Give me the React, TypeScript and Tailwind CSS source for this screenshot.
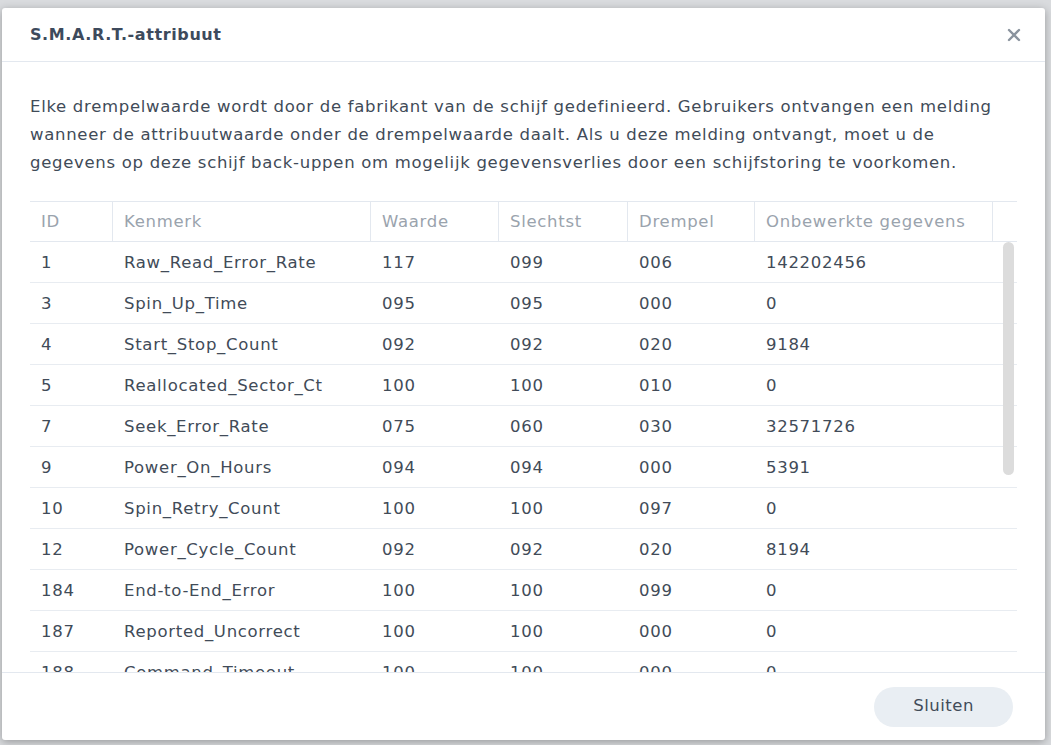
import React from "react";

const rows = [
  ["1","Raw_Read_Error_Rate","117","099","006","142202456"],
  ["3","Spin_Up_Time","095","095","000","0"],
  ["4","Start_Stop_Count","092","092","020","9184"],
  ["5","Reallocated_Sector_Ct","100","100","010","0"],
  ["7","Seek_Error_Rate","075","060","030","32571726"],
  ["9","Power_On_Hours","094","094","000","5391"],
  ["10","Spin_Retry_Count","100","100","097","0"],
  ["12","Power_Cycle_Count","092","092","020","8194"],
  ["184","End-to-End_Error","100","100","099","0"],
  ["187","Reported_Uncorrect","100","100","000","0"],
  ["188","Command_Timeout","100","100","000","0"],
];
const widths = ["w-[83px]","w-[258px]","w-[128px]","w-[129px]","w-[127px]","w-[238px]"];
const heads = ["ID","Kenmerk","Waarde","Slechtst","Drempel","Onbewerkte gegevens"];

export default function App() {
  return (
    <div className="w-[1051px] h-[745px] bg-[#d9dbde] overflow-hidden pt-[8px] pl-[2px]" style={{ fontFamily: '"DejaVu Sans", Verdana, sans-serif' }}>
      <div className="w-[1043px] h-[732px] bg-white rounded-[3px] shadow-[0_2px_8px_rgba(0,0,0,0.3)] flex flex-col">
        <div className="h-[54px] flex items-center justify-between px-[28px] border-b border-[#e3e8ef] shrink-0">
          <span className="text-[16px] tracking-[0.6px] font-bold text-[#3d4a5c]">S.M.A.R.T.-attribuut</span>
          <svg width="14" height="14" viewBox="0 0 14 14" className="mr-[-4px]"><path d="M2 2L12 12M12 2L2 12" stroke="#8a939e" strokeWidth="2.4" strokeLinecap="round"/></svg>
        </div>
        <div className="px-[28px] pt-[31px] flex-1 flex flex-col min-h-0">
          <p className="text-[16.5px] leading-[28px] text-[#414b58] tracking-[0.7px] w-[990px]">
            Elke drempelwaarde wordt door de fabrikant van de schijf gedefinieerd. Gebruikers ontvangen een melding wanneer de attribuutwaarde onder de drempelwaarde daalt. Als u deze melding ontvangt, moet u de gegevens op deze schijf back-uppen om mogelijk gegevensverlies door een schijfstoring te voorkomen.
          </p>
          <div className="mt-[24px] w-[987px] flex-1 min-h-0 flex flex-col overflow-hidden relative">
            <div className="flex h-[41px] border-t border-b border-[#e3e8ef] shrink-0">
              {heads.map((h, i) => (
                <div key={h} className={`${widths[i]} flex items-center pl-[11px] pt-[2px] text-[16.5px] tracking-[0.7px] whitespace-nowrap text-[#9aa3ad] border-r border-[#e3e8ef]`}>{h}</div>
              ))}
            </div>
            {rows.map((r) => (
              <div key={r[0]} className="flex h-[41px] border-b border-[#e8ecf1] shrink-0">
                {r.map((c, i) => (
                  <div key={i} className={`${widths[i]} flex items-center pl-[11px] pt-[3px] text-[16.5px] tracking-[0.7px] whitespace-nowrap text-[#414b58]`}>{c}</div>
                ))}
              </div>
            ))}
            <div className="absolute right-[3px] top-[41px] w-[11px] h-[233px] rounded-full bg-[#dcdcdc]" />
          </div>
        </div>
        <div className="h-[68px] border-t border-[#e3e8ef] flex items-center justify-end pr-[32px] shrink-0">
          <button className="w-[139px] h-[40px] rounded-full bg-[#e9eef3] text-[16.5px] tracking-[0.5px] text-[#414b58]">Sluiten</button>
        </div>
      </div>
    </div>
  );
}
